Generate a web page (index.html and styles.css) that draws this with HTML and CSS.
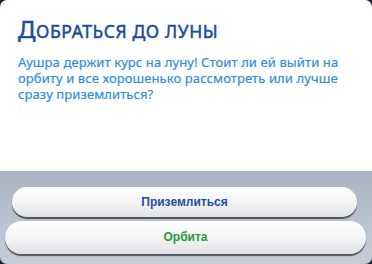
FILE: index.html
```html
<!DOCTYPE html>
<html lang="ru">
<head>
  <meta charset="UTF-8">
  <title>Добраться до луны</title>
  <link rel="stylesheet" href="styles.css">
</head>
<body>
  <div class="dialog">
    <div class="content">
      <h1 class="title"><span class="cap">Д</span>обраться <span class="cap">д</span>о <span class="cap">л</span>уны</h1>
      <p class="text">Аушра держит курс на луну! Стоит ли ей выйти на орбиту и все хорошенько рассмотреть или лучше сразу приземлиться?</p>
    </div>
    <div class="choices">
      <div class="choice choice-land">Приземлиться</div>
      <div class="choice choice-orbit">Орбита</div>
    </div>
  </div>
</body>
</html>
```

FILE: styles.css
```css
body {
  margin: 0;
  background-color: #1d2435;
  font-family: "Noto Sans", Arial, sans-serif;
}
.dialog {
  width: 372px;
  height: 264px;
  border-radius: 7px;
  overflow: hidden;
  display: flex;
  flex-direction: column;
}
.content {
  background-color: #ffffff;
  height: 171px;
  padding: 14px 18px 0 18px;
  box-sizing: border-box;
}
.title {
  margin: 0;
  color: #1b4c9f;
  font-size: 17.5px;
  font-weight: normal;
  text-transform: uppercase;
  letter-spacing: 0.6px;
  line-height: 30px;
  -webkit-text-stroke: 0.5px #1b4c9f;
}
.title .cap {
  font-size: 24px;
}
.title .cap + .cap {
  font-size: 17.5px;
}
.text {
  margin: 8px 0 0 0;
  color: #2d8de2;
  font-size: 13px;
  line-height: 16px;
  letter-spacing: 0.1px;
  -webkit-text-stroke: 0.2px #2d8de2;
}
.choices {
  flex: 1;
  background: linear-gradient(180deg, #a9b2c2 0%, #bcc4d1 60%, #c6cdd8 100%);
  padding: 16px 0 0 0;
  display: flex;
  flex-direction: column;
  gap: 4px;
}
.choice {
  border-radius: 16px;
  background: linear-gradient(180deg, #ffffff 0%, #f4f4f5 50%, #e2e2e4 100%);
  box-shadow: 0 2px 1px rgba(40, 44, 52, 0.75);
  text-align: center;
  font-family: "Liberation Sans", Arial, sans-serif;
  font-weight: bold;
  font-size: 12px;
}
.choice-land {
  margin: 0 15px 0 12px;
  height: 30px;
  line-height: 30px;
  color: #1f4ea6;
}
.choice-orbit {
  margin: 0 6px 0 5px;
  height: 33px;
  line-height: 33px;
  border-radius: 17px;
  color: #2a9a3c;
}
```
